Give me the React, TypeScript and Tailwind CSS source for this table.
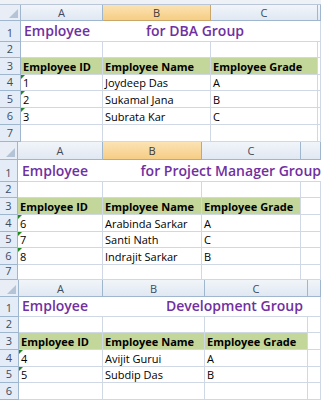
import React from "react";

type Sec = {
  cols: string;
  headerH: string;
  headers: { label: string; sel?: boolean }[];
  rowH: string[];
  titleSpan: string;
  titlePad: string;
  titleGap: string;
  title2: string;
  data: string[][];
  topStrip?: boolean;
};

const sections: Sec[] = [
  {
    topStrip: true,
    cols: "grid-cols-[21px_82px_108px_107px_3px]",
    headerH: "h-[16px]",
    headers: [{ label: "A" }, { label: "B", sel: true }, { label: "C" }, { label: "" }],
    rowH: ["h-[21px]", "h-[16px]", "h-[17px]", "h-[16px]", "h-[17px]", "h-[17px]", "h-[17px]"],
    titleSpan: "col-span-3",
    titlePad: "pl-[3px]",
    titleGap: "w-[122px]",
    title2: "for DBA Group",
    data: [
      ["1", "Joydeep Das", "A"],
      ["2", "Sukamal Jana", "B"],
      ["3", "Subrata Kar", "C"],
    ],
  },
  {
    cols: "grid-cols-[18px_85px_99px_99px_20px]",
    headerH: "h-[18px]",
    headers: [{ label: "A" }, { label: "B", sel: true }, { label: "C" }, { label: "" }],
    rowH: ["h-[22px]", "h-[16px]", "h-[17px]", "h-[17px]", "h-[16px]", "h-[17px]", "h-[15px]"],
    titleSpan: "col-span-4",
    titlePad: "pl-[4px]",
    titleGap: "w-[120px]",
    title2: "for Project Manager Group",
    data: [
      ["6", "Arabinda Sarkar", "A"],
      ["7", "Santi Nath", "C"],
      ["8", "Indrajit Sarkar", "B"],
    ],
  },
  {
    cols: "grid-cols-[19px_84px_102px_103px_13px]",
    headerH: "h-[17px]",
    headers: [{ label: "A" }, { label: "B" }, { label: "C" }, { label: "" }],
    rowH: ["h-[20px]", "h-[16px]", "h-[17px]", "h-[17px]", "h-[16px]", "h-[17px]"],
    titleSpan: "col-span-3",
    titlePad: "pl-[3px]",
    titleGap: "w-[144px]",
    title2: "Development Group",
    data: [
      ["4", "Avijit Gurui", "A"],
      ["5", "Subdip Das", "B"],
    ],
  },
];

const font = { fontFamily: '"Open Sans", "Noto Sans", Arial, sans-serif' };

function RowNum({ n, h }: { n: number; h: string }) {
  return (
    <div
      className={`${h} flex items-end justify-center bg-[#e4ecf7] border-r border-b border-[#9eb6ce] text-[11px] leading-none text-[#3e4b5e] pb-[3px]`}
    >
      {n}
    </div>
  );
}

function Corner({ h }: { h: string }) {
  return (
    <div className={`${h} relative bg-[#e9eef6] border-r border-b border-[#9eb6ce]`}>
      <svg className="absolute right-[2px] bottom-[2px]" width="9" height="9" viewBox="0 0 9 9">
        <polygon points="9,0 9,9 0,9" fill="#b4c3d6" />
      </svg>
    </div>
  );
}

function ColHead({ label, sel, h }: { label: string; sel?: boolean; h: string }) {
  return (
    <div
      className={`${h} flex items-center justify-center border-r border-b text-[11px] leading-none ${
        sel
          ? "bg-gradient-to-b from-[#fbe3b4] to-[#f6cd83] border-[#c9a66a] text-[#3a3a3a]"
          : "bg-gradient-to-b from-[#f1f5fa] to-[#e1e8f2] border-[#9eb6ce] text-[#3e4b5e]"
      }`}
    >
      {label}
    </div>
  );
}

function Cell({
  children,
  h,
  className = "",
  tri,
}: {
  children?: React.ReactNode;
  h: string;
  className?: string;
  tri?: boolean;
}) {
  return (
    <div
      className={`${h} relative flex items-end whitespace-nowrap border-r border-b border-[#d0d7e5] pl-[2px] pb-[2px] text-[11px] leading-none text-black ${className}`}
    >
      {tri && (
        <svg className="absolute left-0 top-0" width="4" height="4" viewBox="0 0 4 4">
          <polygon points="0,0 4,0 0,4" fill="#1f8a1f" />
        </svg>
      )}
      {children}
    </div>
  );
}

function Section({ s }: { s: Sec }) {
  const h = s.rowH;
  const rows: React.ReactNode[] = [];
  rows.push(
    <div key="r1" className={`grid ${s.cols}`}>
      <RowNum n={1} h={h[0]} />
      <div
        className={`${h[0]} ${s.titleSpan} flex items-end whitespace-nowrap border-b border-[#d0d7e5] ${s.titlePad} pb-[3px] text-[14px] font-semibold leading-none text-[#7030a0]`}
      >
        <span className={`${s.titleGap} inline-block`}>Employee</span>
        <span>{s.title2}</span>
      </div>
      {s.titleSpan === "col-span-3" && <Cell h={h[0]} />}
    </div>
  );
  rows.push(
    <div key="r2" className={`grid ${s.cols}`}>
      <RowNum n={2} h={h[1]} />
      <Cell h={h[1]} />
      <Cell h={h[1]} />
      <Cell h={h[1]} />
      <Cell h={h[1]} />
    </div>
  );
  rows.push(
    <div key="r3" className={`grid ${s.cols}`}>
      <RowNum n={3} h={h[2]} />
      {["Employee ID", "Employee Name", "Employee Grade"].map((t) => (
        <Cell key={t} h={h[2]} className="bg-[#c4d79b] font-bold text-[11.5px] border-[#c4d79b] border-b-[#d0d7e5]">
          {t}
        </Cell>
      ))}
      <Cell h={h[2]} />
    </div>
  );
  s.data.forEach((d, i) => {
    const hh = h[3 + i];
    rows.push(
      <div key={"d" + i} className={`grid ${s.cols}`}>
        <RowNum n={4 + i} h={hh} />
        <Cell h={hh} tri>
          {d[0]}
        </Cell>
        <Cell h={hh}>{d[1]}</Cell>
        <Cell h={hh}>{d[2]}</Cell>
        <Cell h={hh} />
      </div>
    );
  });
  for (let r = 3 + s.data.length; r < h.length; r++) {
    rows.push(
      <div key={"e" + r} className={`grid ${s.cols}`}>
        <RowNum n={r + 1} h={h[r]} />
        <Cell h={h[r]} />
        <Cell h={h[r]} />
        <Cell h={h[r]} />
        <Cell h={h[r]} />
      </div>
    );
  }
  return (
    <div className="flex flex-col">
      {s.topStrip && <div className="h-[5px] bg-[#eef2f7] border-b border-[#b8c6d8]" />}
      <div className={`grid ${s.cols}`}>
        <Corner h={s.headerH} />
        {s.headers.map((c, i) => (
          <ColHead key={i} label={c.label} sel={c.sel} h={s.headerH} />
        ))}
      </div>
      {rows}
    </div>
  );
}

export default function App() {
  return (
    <div className="w-[321px] h-[400px] overflow-hidden bg-white flex flex-col" style={font}>
      {sections.map((s, i) => (
        <Section key={i} s={s} />
      ))}
    </div>
  );
}
